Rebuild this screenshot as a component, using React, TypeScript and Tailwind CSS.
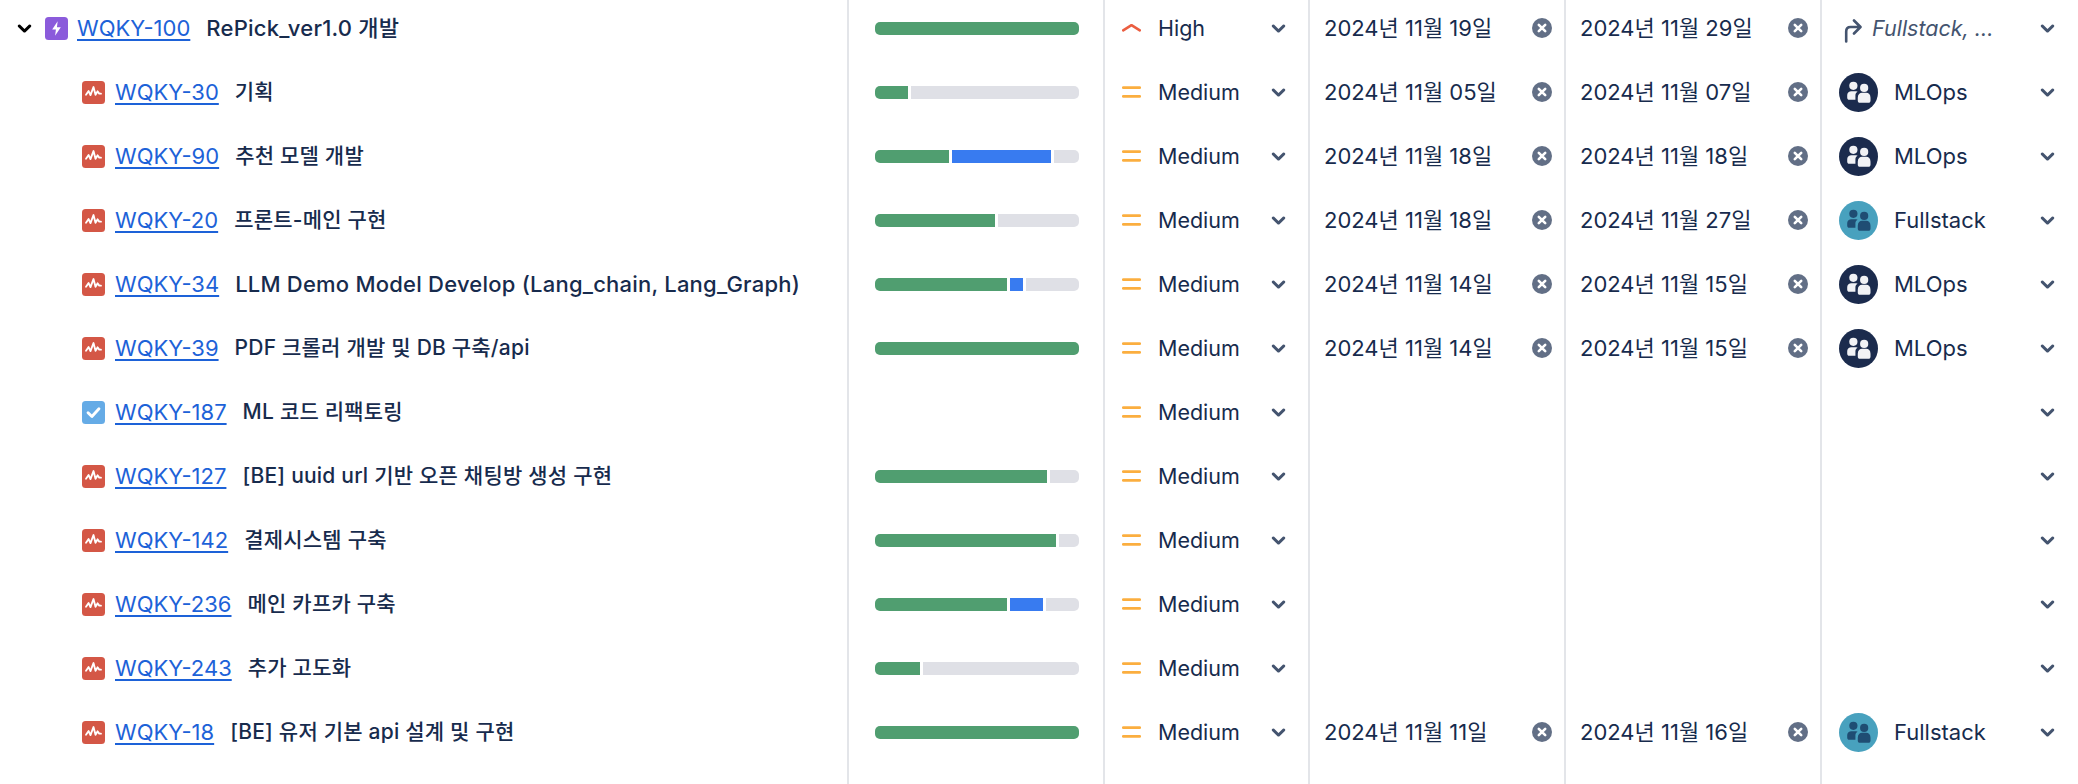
import React from 'react';

type Seg = { done: number; prog?: number };

type Issue = {
  key: string;
  title: string;
  type: 'epic' | 'bug' | 'task';
  bar?: Seg;
  start?: string;
  end?: string;
  team?: 'MLOps' | 'Fullstack';
  latin?: boolean;
};

const issues: Issue[] = [
  { key: 'WQKY-30', title: '기획', type: 'bug', bar: { done: 33 }, start: '2024년 11월 05일', end: '2024년 11월 07일', team: 'MLOps' },
  { key: 'WQKY-90', title: '추천 모델 개발', type: 'bug', bar: { done: 74, prog: 99 }, start: '2024년 11월 18일', end: '2024년 11월 18일', team: 'MLOps' },
  { key: 'WQKY-20', title: '프론트-메인 구현', type: 'bug', bar: { done: 120 }, start: '2024년 11월 18일', end: '2024년 11월 27일', team: 'Fullstack' },
  { key: 'WQKY-34', title: 'LLM Demo Model Develop (Lang_chain, Lang_Graph)', type: 'bug', bar: { done: 132, prog: 13 }, start: '2024년 11월 14일', end: '2024년 11월 15일', team: 'MLOps', latin: true },
  { key: 'WQKY-39', title: 'PDF 크롤러 개발 및 DB 구축/api', type: 'bug', bar: { done: 204 }, start: '2024년 11월 14일', end: '2024년 11월 15일', team: 'MLOps' },
  { key: 'WQKY-187', title: 'ML 코드 리팩토링', type: 'task' },
  { key: 'WQKY-127', title: '[BE] uuid url 기반 오픈 채팅방 생성 구현', type: 'bug', bar: { done: 172 } },
  { key: 'WQKY-142', title: '결제시스템 구축', type: 'bug', bar: { done: 181 } },
  { key: 'WQKY-236', title: '메인 카프카 구축', type: 'bug', bar: { done: 132, prog: 33 } },
  { key: 'WQKY-243', title: '추가 고도화', type: 'bug', bar: { done: 45 } },
  { key: 'WQKY-18', title: '[BE] 유저 기본 api 설계 및 구현', type: 'bug', bar: { done: 204 }, start: '2024년 11월 11일', end: '2024년 11월 16일', team: 'Fullstack' },
];

const Chevron = ({ className = 'text-[#44546F]' }: { className?: string }) => (
  <svg viewBox="0 0 16 16" className={`w-[19px] h-[19px] shrink-0 ${className}`} fill="none">
    <path d="M3.5 5.8 8 10.2l4.5-4.4" stroke="currentColor" strokeWidth="2.4" strokeLinecap="round" strokeLinejoin="round" />
  </svg>
);

const TypeIcon = ({ type }: { type: Issue['type'] }) => {
  if (type === 'epic') {
    return (
      <svg viewBox="0 0 16 16" className="w-[23px] h-[23px] shrink-0">
        <rect width="16" height="16" rx="2.5" fill="#8B5BDB" />
        <path d="M8.8 3 5 8.7h2.6L7 13l4-5.8H8.3L8.8 3Z" fill="#fff" />
      </svg>
    );
  }
  if (type === 'task') {
    return (
      <svg viewBox="0 0 16 16" className="w-[23px] h-[23px] shrink-0">
        <rect width="16" height="16" rx="2.5" fill="#65ABE6" />
        <path d="m4.2 8.2 2.7 2.6 4.9-5.4" stroke="#fff" strokeWidth="2" fill="none" strokeLinecap="round" strokeLinejoin="round" />
      </svg>
    );
  }
  return (
    <svg viewBox="0 0 16 16" className="w-[23px] h-[23px] shrink-0">
      <rect width="16" height="16" rx="2.5" fill="#D45746" />
      <path d="M2.8 9.6 4.6 7l1.3 2.8L8 4.2l1.4 5.4 1.4-2.4 1.2 1.6h1.2" stroke="#fff" strokeWidth="1.3" fill="none" strokeLinecap="round" strokeLinejoin="round" />
    </svg>
  );
};

const ProgressBar = ({ bar }: { bar?: Seg }) => {
  if (!bar) return null;
  const full = bar.done >= 204;
  return (
    <div className="flex w-[204px] h-[13px] gap-[3px] rounded-[5px] overflow-hidden">
      <div className="bg-[#509E70] shrink-0" style={{ width: bar.done }} />
      {bar.prog ? <div className="bg-[#387BF0] shrink-0" style={{ width: bar.prog }} /> : null}
      {!full ? <div className="bg-[#DFE0E6] flex-1" /> : null}
    </div>
  );
};

const Priority = ({ high }: { high?: boolean }) => (
  <div className="flex items-center h-full pl-[17px] pr-[20px]">
    <svg viewBox="0 0 19 14" className="w-[19px] h-[14px] shrink-0">
      {high ? (
        <path d="M1.2 9.4 9.5 4.2l8.3 5.2" stroke="#EB5E41" strokeWidth="2.6" fill="none" strokeLinecap="round" strokeLinejoin="round" />
      ) : (
        <g stroke="#FBAE3F" strokeWidth="2.8" strokeLinecap="round">
          <path d="M1.3 2.6h16.4" />
          <path d="M1.3 11.4h16.4" />
        </g>
      )}
    </svg>
    <span className="ml-[17px] flex-1 text-[21.5px]">{high ? 'High' : 'Medium'}</span>
    <Chevron />
  </div>
);

const DateCell = ({ value }: { value?: string }) =>
  value ? (
    <div className="flex items-center justify-between h-full pl-[14px] pr-[12px]">
      <span>{value}</span>
      <svg viewBox="0 0 20 20" className="w-[20px] h-[20px] shrink-0">
        <circle cx="10" cy="10" r="10" fill="#626F86" />
        <path d="m6.8 6.8 6.4 6.4m0-6.4-6.4 6.4" stroke="#fff" strokeWidth="2.6" strokeLinecap="round" />
      </svg>
    </div>
  ) : null;

const TeamAvatar = ({ team }: { team: 'MLOps' | 'Fullstack' }) => {
  const dark = team === 'MLOps';
  const fg = dark ? '#F1F2F5' : '#1F4D73';
  return (
    <svg viewBox="0 0 38 38" className="w-[39px] h-[39px] shrink-0">
      <circle cx="19" cy="19" r="19" fill={dark ? '#1B2B4D' : '#48A1BE'} />
      <circle cx="14" cy="12.5" r="4" fill={fg} />
      <path d="M8 21.5c0-2.4 2-3.7 4-3.7h4c1.2 0 2 .4 2 .4-1.4.8-2 2-2 3.6V26h-6c-1.2 0-2-.8-2-2v-2.5Z" fill={fg} />
      <circle cx="24.5" cy="14.5" r="4" fill={fg} />
      <path d="M18.3 24c0-3 2-4.7 4.2-4.7h4c2.4 0 4.2 1.7 4.2 4.7v3c0 1.2-.8 2-2 2h-8.4c-1.2 0-2-.8-2-2v-3Z" fill={fg} />
    </svg>
  );
};

const Assignee = ({ team }: { team?: 'MLOps' | 'Fullstack' }) => (
  <div className="flex items-center h-full pl-[17px] pr-[21px]">
    {team ? (
      <>
        <TeamAvatar team={team} />
        <span className="ml-[16px]">{team}</span>
      </>
    ) : null}
    <div className="ml-auto">
      <Chevron />
    </div>
  </div>
);

const Row = ({ issue }: { issue: Issue }) => (
  <div className="flex h-[64px]">
    <div className="w-[849px] shrink-0 border-r-2 border-[#E3E5E9] flex items-center pl-[82px]">
      <TypeIcon type={issue.type} />
      <a className="ml-[10px] text-[#1D62D8] underline underline-offset-[3px]">{issue.key}</a>
      <span className={issue.latin ? 'ml-[16px] font-medium tracking-[0.01em]' : 'ml-[16px] font-medium tracking-[0.01em] text-[21px]'}>
        {issue.title}
      </span>
    </div>
    <div className="w-[256px] shrink-0 border-r-2 border-[#E3E5E9] flex items-center pl-[26px]">
      <ProgressBar bar={issue.bar} />
    </div>
    <div className="w-[205px] shrink-0 border-r-2 border-[#E3E5E9]">
      <Priority />
    </div>
    <div className="w-[256px] shrink-0 border-r-2 border-[#E3E5E9]">
      <DateCell value={issue.start} />
    </div>
    <div className="w-[256px] shrink-0 border-r-2 border-[#E3E5E9]">
      <DateCell value={issue.end} />
    </div>
    <div className="flex-1">
      <Assignee team={issue.team} />
    </div>
  </div>
);

export default function App() {
  return (
    <div className="h-[784px] overflow-hidden bg-white text-[#172B4D] text-[22px] font-['Inter','Noto_Sans_CJK_KR',sans-serif]">
      <div className="-mt-1">
        {/* parent epic */}
        <div className="flex h-[64px]">
          <div className="w-[849px] shrink-0 border-r-2 border-[#E3E5E9] flex items-center pl-[15px]">
            <Chevron className="text-black" />
            <div className="ml-[11px]">
              <TypeIcon type="epic" />
            </div>
            <a className="ml-[9px] text-[#1D62D8] underline underline-offset-[3px]">WQKY-100</a>
            <span className="ml-[16px] font-medium tracking-[0.01em]">RePick_ver1.0 개발</span>
          </div>
          <div className="w-[256px] shrink-0 border-r-2 border-[#E3E5E9] flex items-center pl-[26px]">
            <ProgressBar bar={{ done: 204 }} />
          </div>
          <div className="w-[205px] shrink-0 border-r-2 border-[#E3E5E9]">
            <Priority high />
          </div>
          <div className="w-[256px] shrink-0 border-r-2 border-[#E3E5E9]">
            <DateCell value="2024년 11월 19일" />
          </div>
          <div className="w-[256px] shrink-0 border-r-2 border-[#E3E5E9]">
            <DateCell value="2024년 11월 29일" />
          </div>
          <div className="flex-1 flex items-center pl-[22px] pr-[21px]">
            <svg viewBox="0 0 18 24" className="w-[18px] h-[24px] mt-[6px] shrink-0 text-[#44546F]" fill="none">
              <path d="M2.2 22.5V12.5c0-2.8 1.6-4.5 4.3-4.5h9.5M10 1.5 16.5 8 10 14.5" stroke="currentColor" strokeWidth="2.6" strokeLinecap="round" strokeLinejoin="round" />
            </svg>
            <span className="ml-[10px] italic text-[#44546F] text-[21.5px]">Fullstack, ...</span>
            <div className="ml-auto">
              <Chevron />
            </div>
          </div>
        </div>
        {issues.map((issue) => (
          <Row key={issue.key} issue={issue} />
        ))}
        <div className="flex h-[40px]">
          <div className="w-[849px] shrink-0 border-r-2 border-[#E3E5E9]" />
          <div className="w-[256px] shrink-0 border-r-2 border-[#E3E5E9]" />
          <div className="w-[205px] shrink-0 border-r-2 border-[#E3E5E9]" />
          <div className="w-[256px] shrink-0 border-r-2 border-[#E3E5E9]" />
          <div className="w-[256px] shrink-0 border-r-2 border-[#E3E5E9]" />
        </div>
      </div>
    </div>
  );
}
